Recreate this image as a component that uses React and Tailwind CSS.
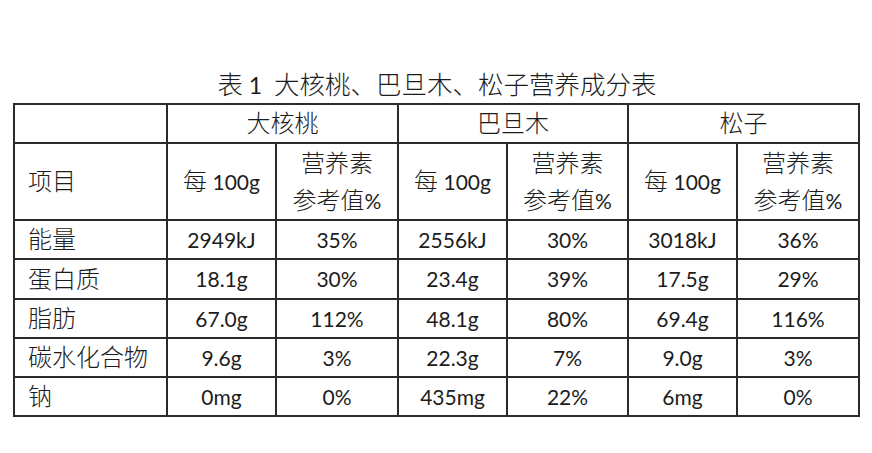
const rows = [
  ["能量", "2949kJ", "35%", "2556kJ", "30%", "3018kJ", "36%"],
  ["蛋白质", "18.1g", "30%", "23.4g", "39%", "17.5g", "29%"],
  ["脂肪", "67.0g", "112%", "48.1g", "80%", "69.4g", "116%"],
  ["碳水化合物", "9.6g", "3%", "22.3g", "7%", "9.0g", "3%"],
  ["钠", "0mg", "0%", "435mg", "22%", "6mg", "0%"],
];

const heights = ["h-[39px]", "h-[40px]", "h-[39px]", "h-[39px]", "h-[39px]"];

// CJK glyphs run a bit larger than the latin ones in the original
function T({ children, big }) {
  const parts = String(children).split(/([\u3000-\u9fff]+)/).filter(Boolean);
  return parts.map((p, i) =>
    /[\u3000-\u9fff]/.test(p) ? (
      <span key={i} className={big ? "text-[25.5px] font-light" : "text-[24px] font-light"}>
        {p}
      </span>
    ) : (
      <span key={i}>{p}</span>
    )
  );
}

export default function App() {
  const cell = "border-2 border-[#2b2b2b] text-center p-0 align-middle";
  return (
    <div className="w-[872px] h-[453px] bg-white pt-[68px] text-[#1c1c1c] font-['Lato','Noto_Sans_CJK_SC',sans-serif]">
      <div className="text-center text-[23px] leading-[32px] mb-[2px] pl-[2px]">
        <T big>表</T> 1&nbsp;&nbsp;<T big>大核桃、巴旦木、松子营养成分表</T>
      </div>
      <table className="ml-[13px] w-[845px] table-fixed border-collapse text-[21px] leading-[28px]">
        <colgroup>
          <col className="w-[153px]" />
          <col className="w-[109px]" />
          <col className="w-[122px]" />
          <col className="w-[109px]" />
          <col className="w-[121px]" />
          <col className="w-[109px]" />
          <col className="w-[122px]" />
        </colgroup>
        <tbody>
          <tr className="h-[39px]">
            <td className={cell}></td>
            <td className={cell} colSpan={2}><T>大核桃</T></td>
            <td className={cell} colSpan={2}><T>巴旦木</T></td>
            <td className={cell} colSpan={2}><T>松子</T></td>
          </tr>
          <tr className="h-[77px]">
            <td className={`${cell} text-left pl-[13px]`}><T>项目</T></td>
            {[0, 1, 2].map((i) => [
              <td key={`a${i}`} className={cell}><T>每 100g</T></td>,
              <td key={`b${i}`} className={`${cell} leading-[36px]`}>
                <T>营养素</T>
                <br />
                <T>参考值%</T>
              </td>,
            ])}
          </tr>
          {rows.map((r, i) => (
            <tr key={r[0]} className={heights[i]}>
              {r.map((v, j) => (
                <td key={j} className={j === 0 ? `${cell} text-left pl-[13px]` : cell}>
                  <T>{v}</T>
                </td>
              ))}
            </tr>
          ))}
        </tbody>
      </table>
    </div>
  );
}
